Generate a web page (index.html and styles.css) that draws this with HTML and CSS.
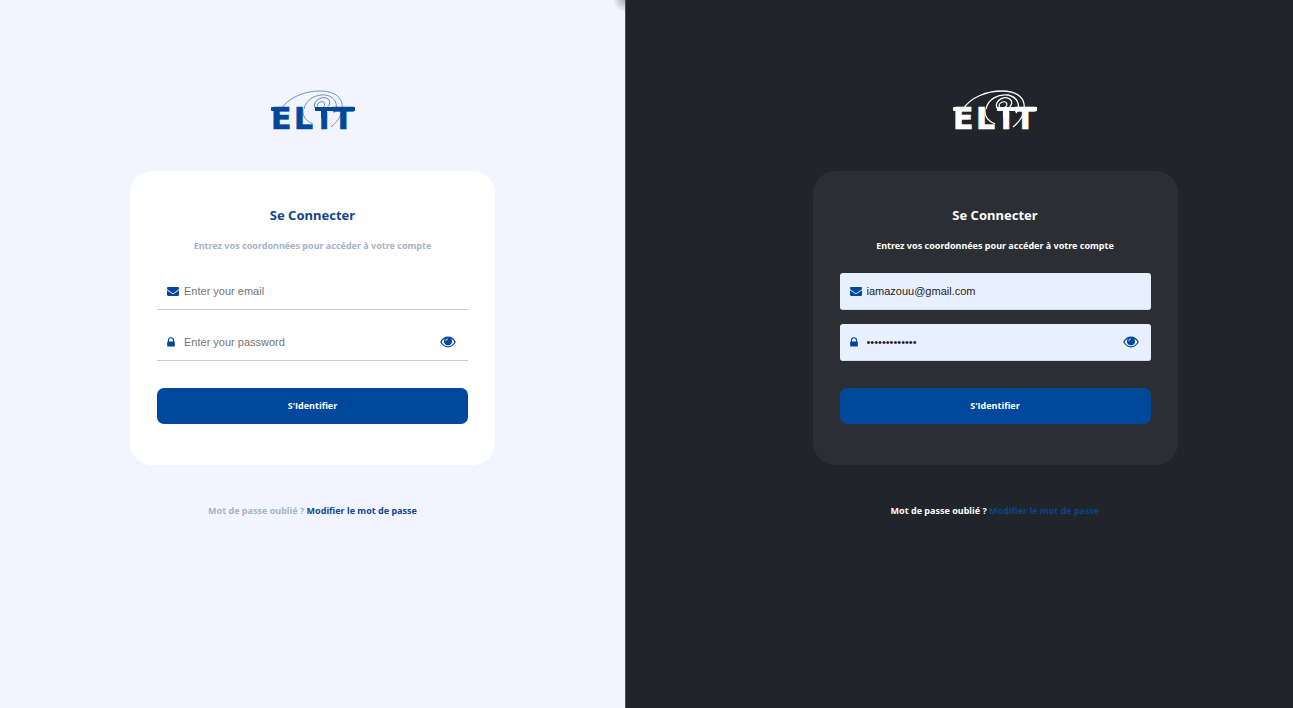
FILE: index.html
```html
<!DOCTYPE html>
<html lang="fr">
<head>
<meta charset="utf-8">
<title>ELIT - Se Connecter</title>
<link rel="stylesheet" href="styles.css">
</head>
<body>
<svg class="defs" aria-hidden="true">
  <symbol id="orbits" viewBox="0 0 88 44">
    <g fill="none" stroke="currentColor">
      <path d="M12 21C20 9 36 3 51 3C66 3 75 10 73 22C72 29 67 35 62 39"/>
      <path d="M35 21C37 11 47 6 57 7C67 9 70 18 65 25M34 21C33 28 37 33 44 36"/>
      <ellipse cx="53" cy="16" rx="8" ry="6" transform="rotate(-25 53 16)"/>
      <ellipse cx="52" cy="17" rx="4" ry="3" transform="rotate(-25 52 17)"/>
    </g>
  </symbol>
  <symbol id="mail" viewBox="0 0 512 448">
    <path fill="currentColor" d="M512 166v198a48 48 0 0 1-48 48H48a48 48 0 0 1-48-48V166c9 10 19 19 31 26 62 42 116 79 140 96 28 21 53 40 85 40s57-19 85-40c30-22 79-55 140-96 12-8 22-17 31-26zM512 84c0 35-27 67-58 88-46 32-91 63-136 94-19 13-41 31-62 31s-43-18-62-31c-45-31-90-62-136-94C31 153 0 117 0 88c0-32 17-52 48-52h416c26 0 48 21 48 48z"/>
  </symbol>
  <symbol id="lock" viewBox="0 0 320 416">
    <path fill="currentColor" d="M80 192h160v-56a80 80 0 0 0-160 0zM320 216v160a24 24 0 0 1-24 24H24a24 24 0 0 1-24-24V216a24 24 0 0 1 24-24h8v-56a128 128 0 0 1 256 0v56h8a24 24 0 0 1 24 24z"/>
  </symbol>
  <symbol id="eye" viewBox="0 0 16 12">
    <path fill="none" stroke="currentColor" stroke-width="1.2" d="M.8 6C2.600 2.900 5.100 1.200 8 1.200s5.400 1.700 7.200 4.800C13.400 9.100 10.900 10.800 8 10.800S2.600 9.100.8 6z"/>
    <circle cx="8" cy="5.200" r="4" fill="currentColor"/>
    <path class="glint" d="M5.700 5.200Q5.700 3 7.900 2.900"/>
  </symbol>
</svg>
<main class="screens">
  <section class="screen light">
    <svg class="logo" viewBox="0 0 88 44" role="img" aria-label="ELIT">
      <use class="orbits" href="#orbits" width="88" height="44"/>
      <text class="logo-text" y="41" x="2 25 50 64">ELıT</text>
      <rect class="logo-bar" x="46" y="19" width="40" height="4"/>
      <rect class="logo-bar" x="52" y="20" width="6" height="10"/>
      <rect class="logo-bar" x="2" y="19" width="7" height="4" rx="1"/>
    </svg>
    <form class="card">
      <h1 class="title">Se Connecter</h1>
      <p class="subtitle">Entrez vos coordonnées pour accéder à votre compte</p>
      <div class="field">
        <label class="lead" for="email-light" aria-label="Email"><svg class="icon-mail"><use href="#mail"/></svg></label>
        <input class="input" id="email-light" type="email" placeholder="Enter your email">
      </div>
      <div class="field">
        <label class="lead" for="password-light" aria-label="Password"><svg class="icon-lock"><use href="#lock"/></svg></label>
        <input class="input" id="password-light" type="password" placeholder="Enter your password">
        <button class="reveal" type="button" aria-label="Afficher le mot de passe"><svg class="icon-eye"><use href="#eye"/></svg></button>
      </div>
      <button class="submit" type="submit">S'Identifier</button>
    </form>
    <p class="forgot">Mot de passe oublié ? <a class="link" href="#">Modifier le mot de passe</a></p>
  </section>
  <section class="screen dark">
    <svg class="logo" viewBox="0 0 88 44" role="img" aria-label="ELIT">
      <use class="orbits" href="#orbits" width="88" height="44"/>
      <text class="logo-text" y="41" x="2 25 50 64">ELıT</text>
      <rect class="logo-bar" x="46" y="19" width="40" height="4"/>
      <rect class="logo-bar" x="52" y="20" width="6" height="10"/>
      <rect class="logo-bar" x="2" y="19" width="7" height="4" rx="1"/>
    </svg>
    <form class="card">
      <h1 class="title">Se Connecter</h1>
      <p class="subtitle">Entrez vos coordonnées pour accéder à votre compte</p>
      <div class="field">
        <label class="lead" for="email-dark" aria-label="Email"><svg class="icon-mail"><use href="#mail"/></svg></label>
        <input class="input" id="email-dark" type="email" value="iamazouu@gmail.com">
      </div>
      <div class="field">
        <label class="lead" for="password-dark" aria-label="Password"><svg class="icon-lock"><use href="#lock"/></svg></label>
        <input class="input" id="password-dark" type="password" value="motdepasse123">
        <button class="reveal" type="button" aria-label="Afficher le mot de passe"><svg class="icon-eye"><use href="#eye"/></svg></button>
      </div>
      <button class="submit" type="submit">S'Identifier</button>
    </form>
    <p class="forgot">Mot de passe oublié ? <a class="link" href="#">Modifier le mot de passe</a></p>
  </section>
</main>
</body>
</html>
```

FILE: styles.css
```css
* { box-sizing: border-box; }
body {
  margin: 0;
  font-family: "Noto Sans", "Open Sans", sans-serif;
  font-weight: 700;
}
.defs { position: absolute; width: 0; height: 0; }
.screens {
  display: grid;
  grid-template-columns: 625fr 668fr;
  min-height: 100vh;
}
.screen {
  --blue: #00489c;
  display: flex;
  flex-direction: column;
  align-items: center;
  padding: 88px 24px 24px;
}
.light {
  --heading: #124590;
  --muted: #a3b3c8;
  --card: #ffffff;
  --field: #ffffff;
  --line: #cccccc;
  --radius: 0;
  --link: #124590;
  background: radial-gradient(circle at 100% 0, #a9acb6, #f2f5ff 12px);
}
.dark {
  --heading: #ffffff;
  --muted: #ffffff;
  --card: #2b2e33;
  --field: #e8f0fe;
  --line: #d5dbe6;
  --radius: 3px;
  --link: #0c4389;
  padding-left: 95px;
  background: #212429;
  border-left: 1px solid #4b5157;
}
.logo {
  width: 88px;
  height: 44px;
  overflow: visible;
  color: var(--blue);
}
.dark .logo { color: #ffffff; }
.orbits { color: #5377ad; stroke-width: 0.8; }
.dark .orbits { color: #ffffff; stroke-width: 1.3; }
.logo-bar { fill: currentColor; }
.logo-text {
  fill: currentColor;
  stroke: currentColor;
  stroke-width: 0.6;
  font: 700 30px "DejaVu Sans", sans-serif;
}
.card {
  display: flex;
  flex-direction: column;
  width: 100%;
  max-width: 365px;
  margin-top: 39px;
  padding: 34px 27px 41px;
  border-radius: 22px;
  background: var(--card);
}
.title {
  margin: 0;
  font-size: 13px;
  line-height: 20px;
  text-align: center;
  color: var(--heading);
}
.subtitle {
  margin: 13px 0 19px;
  font-size: 9px;
  line-height: 16px;
  text-align: center;
  color: var(--muted);
}
.field {
  display: flex;
  align-items: center;
  height: 37px;
  margin-bottom: 14px;
  padding: 0 12px 0 10px;
  border-bottom: 1px solid var(--line);
  border-radius: var(--radius);
  background: var(--field);
  color: var(--blue);
}
.lead {
  display: flex;
  width: 17px;
}
.icon-mail { width: 12px; height: 11px; }
.icon-lock { width: 8px; height: 10px; }
.icon-eye { display: block; width: 16px; height: 12px; }
.glint { fill: none; stroke: var(--field); stroke-width: 0.8; }
.input {
  flex: 1;
  min-width: 0;
  padding: 0;
  border: 0;
  outline: 0;
  background: transparent;
  font: 400 11px/16px "Liberation Sans", Arial, sans-serif;
  color: #1d1f24;
}
.input::placeholder { color: #757575; }
.reveal {
  padding: 0;
  border: 0;
  background: transparent;
  color: inherit;
}
.submit {
  height: 36px;
  margin-top: 13px;
  border: 0;
  border-radius: 7px;
  background: var(--blue);
  color: #ffffff;
  font: 700 9px/16px "Open Sans", sans-serif;
}
.forgot {
  margin: 38px 0 0;
  font-size: 9px;
  line-height: 16px;
  color: var(--muted);
}
.link {
  color: var(--link);
  text-decoration: none;
}
```
